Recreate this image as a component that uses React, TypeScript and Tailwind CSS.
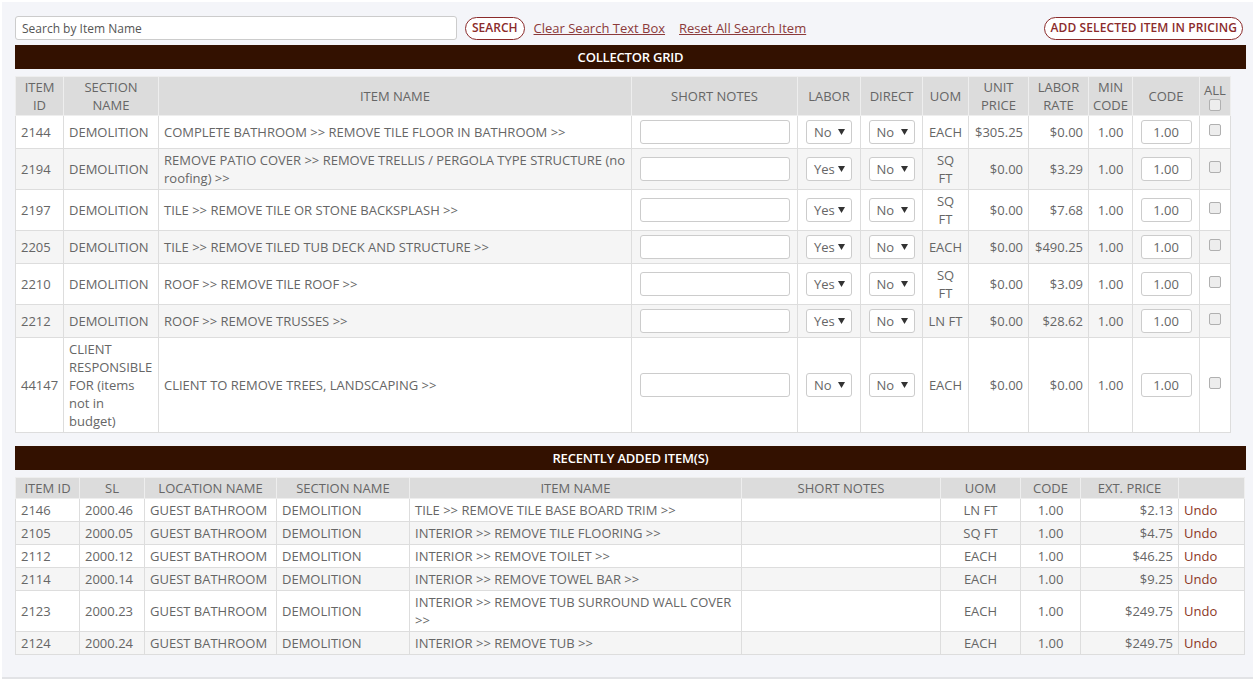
import type { ReactNode } from "react";

type CollectorRow = {
  id: string;
  section: string;
  name: string;
  labor: string;
  direct: string;
  uom: string;
  unit: string;
  rate: string;
};

const collectorRows: CollectorRow[] = [
  { id: "2144", section: "DEMOLITION", name: "COMPLETE BATHROOM >> REMOVE TILE FLOOR IN BATHROOM >>", labor: "No", direct: "No", uom: "EACH", unit: "$305.25", rate: "$0.00" },
  { id: "2194", section: "DEMOLITION", name: "REMOVE PATIO COVER >> REMOVE TRELLIS / PERGOLA TYPE STRUCTURE (no roofing) >>", labor: "Yes", direct: "No", uom: "SQ\nFT", unit: "$0.00", rate: "$3.29" },
  { id: "2197", section: "DEMOLITION", name: "TILE >> REMOVE TILE OR STONE BACKSPLASH >>", labor: "Yes", direct: "No", uom: "SQ\nFT", unit: "$0.00", rate: "$7.68" },
  { id: "2205", section: "DEMOLITION", name: "TILE >> REMOVE TILED TUB DECK AND STRUCTURE >>", labor: "Yes", direct: "No", uom: "EACH", unit: "$0.00", rate: "$490.25" },
  { id: "2210", section: "DEMOLITION", name: "ROOF >> REMOVE TILE ROOF >>", labor: "Yes", direct: "No", uom: "SQ\nFT", unit: "$0.00", rate: "$3.09" },
  { id: "2212", section: "DEMOLITION", name: "ROOF >> REMOVE TRUSSES >>", labor: "Yes", direct: "No", uom: "LN FT", unit: "$0.00", rate: "$28.62" },
  { id: "44147", section: "CLIENT RESPONSIBLE FOR (items not in budget)", name: "CLIENT TO REMOVE TREES, LANDSCAPING >>", labor: "No", direct: "No", uom: "EACH", unit: "$0.00", rate: "$0.00" },
];

const recentRows = [
  { id: "2146", sl: "2000.46", loc: "GUEST BATHROOM", section: "DEMOLITION", name: "TILE >> REMOVE TILE BASE BOARD TRIM >>", uom: "LN FT", price: "$2.13" },
  { id: "2105", sl: "2000.05", loc: "GUEST BATHROOM", section: "DEMOLITION", name: "INTERIOR >> REMOVE TILE FLOORING >>", uom: "SQ FT", price: "$4.75" },
  { id: "2112", sl: "2000.12", loc: "GUEST BATHROOM", section: "DEMOLITION", name: "INTERIOR >> REMOVE TOILET >>", uom: "EACH", price: "$46.25" },
  { id: "2114", sl: "2000.14", loc: "GUEST BATHROOM", section: "DEMOLITION", name: "INTERIOR >> REMOVE TOWEL BAR >>", uom: "EACH", price: "$9.25" },
  { id: "2123", sl: "2000.23", loc: "GUEST BATHROOM", section: "DEMOLITION", name: "INTERIOR >> REMOVE TUB SURROUND WALL COVER >>", uom: "EACH", price: "$249.75" },
  { id: "2124", sl: "2000.24", loc: "GUEST BATHROOM", section: "DEMOLITION", name: "INTERIOR >> REMOVE TUB >>", uom: "EACH", price: "$249.75" },
];

function Bar({ children }: { children: ReactNode }) {
  return (
    <div className="h-[24px] bg-[#331100] flex items-center justify-center text-white font-semibold text-[13px] tracking-[-0.2px]">
      {children}
    </div>
  );
}

function Th({ children }: { children?: ReactNode }) {
  return (
    <th className="bg-[#dcdcdc] border border-[#eeeeee] px-[4px] py-[1px] font-normal text-center align-middle text-[#666]">
      {children}
    </th>
  );
}

function Select({ value }: { value: string }) {
  return (
    <div className="relative w-[46px] h-[24px] my-[2px] mx-auto">
      <div className="w-full h-full border border-[#cccccc] rounded-[3px] bg-white flex items-center pl-[7px] text-[13px] text-[#666]">
        {value}
      </div>
      <svg className="absolute right-[7px] top-[9px]" width="7" height="6" viewBox="0 0 7 6">
        <polygon points="0,0 7,0 3.5,6" fill="#333" />
      </svg>
    </div>
  );
}

function Check() {
  return <span className="inline-block w-[12px] h-[12px] border border-[#b0b0b0] rounded-[2px] bg-[#ededed]" />;
}

export default function App() {
  const td = "border border-[#dddddd] px-[5px] py-[2px] align-middle";
  return (
    <div className="bg-white pt-[2px] px-[2px] min-h-[679px] text-[13px] leading-[18px] text-[#666]" style={{ fontFamily: '"Open Sans", sans-serif' }}>
      <div className="bg-[#f4f5f9] border-b-2 border-[#e2e3e6] pl-[13px] pr-[7px] pt-[14px] h-[677px]">
        <div className="flex items-center h-[24px]">
          <input
            className="w-[442px] h-[24px] border border-[#cccccc] rounded-[3px] bg-white px-[6px] text-[12px] text-[#555] outline-none"
            defaultValue="Search by Item Name"
          />
          <button className="ml-[8px] h-[23px] px-[6px] rounded-full border border-[#8b2b2b] text-[12px] font-semibold text-[#8b2b2b] bg-white">
            SEARCH
          </button>
          <a className="ml-[9px] underline text-[#8b3a3a] text-[13px]">Clear Search Text Box</a>
          <a className="ml-[14px] underline text-[#8b3a3a] text-[13px]">Reset All Search Item</a>
          <button className="ml-auto mr-[3px] h-[23px] px-[5px] rounded-full border border-[#8b2b2b] text-[12px] font-semibold tracking-[0.1px] text-[#8b2b2b] bg-white">
            ADD SELECTED ITEM IN PRICING
          </button>
        </div>

        <div className="mt-[5px]">
          <Bar>COLLECTOR GRID</Bar>
        </div>

        <table className="mt-[7px] w-[1215px] table-fixed border-collapse bg-white">
          <colgroup>
            <col className="w-[48px]" />
            <col className="w-[95px]" />
            <col className="w-[473px]" />
            <col className="w-[166px]" />
            <col className="w-[63px]" />
            <col className="w-[62px]" />
            <col className="w-[46px]" />
            <col className="w-[60px]" />
            <col className="w-[60px]" />
            <col className="w-[44px]" />
            <col className="w-[67px]" />
            <col className="w-[31px]" />
          </colgroup>
          <thead>
            <tr>
              <Th>ITEM ID</Th>
              <Th>SECTION NAME</Th>
              <Th>ITEM NAME</Th>
              <Th>SHORT NOTES</Th>
              <Th>LABOR</Th>
              <Th>DIRECT</Th>
              <Th>UOM</Th>
              <Th>UNIT PRICE</Th>
              <Th>LABOR RATE</Th>
              <Th>MIN CODE</Th>
              <Th>CODE</Th>
              <Th>
                <div className="flex flex-col items-center">
                  <span>ALL</span>
                  <Check />
                </div>
              </Th>
            </tr>
          </thead>
          <tbody>
            {collectorRows.map((r, i) => (
              <tr key={r.id} className={i % 2 === 1 ? "bg-[#f5f5f5]" : "bg-white"}>
                <td className={td}>{r.id}</td>
                <td className={td}>{r.section}</td>
                <td className={td}>{r.name}</td>
                <td className={td + " text-center"}>
                  <div className="mx-auto my-[2px] w-[150px] h-[24px] border border-[#cccccc] rounded-[3px] bg-white" />
                </td>
                <td className={td}>
                  <Select value={r.labor} />
                </td>
                <td className={td}>
                  <Select value={r.direct} />
                </td>
                <td className={td + " text-center px-[3px] whitespace-pre-line"}>{r.uom}</td>
                <td className={td + " text-right px-[4px]"}>{r.unit}</td>
                <td className={td + " text-right px-[4px]"}>{r.rate}</td>
                <td className={td + " text-center"}>1.00</td>
                <td className={td}>
                  <div className="mx-auto my-[2px] w-[51px] h-[24px] border border-[#cccccc] rounded-[3px] bg-white flex items-center justify-center">
                    1.00
                  </div>
                </td>
                <td className={td + " text-center"}>
                  <div className="-mt-[2px]">
                    <Check />
                  </div>
                </td>
              </tr>
            ))}
          </tbody>
        </table>

        <div className="mt-[13px]">
          <Bar>RECENTLY ADDED ITEM(S)</Bar>
        </div>

        <table className="mt-[7px] w-[1229px] table-fixed border-collapse bg-white">
          <colgroup>
            <col className="w-[64px]" />
            <col className="w-[65px]" />
            <col className="w-[132px]" />
            <col className="w-[133px]" />
            <col className="w-[332px]" />
            <col className="w-[199px]" />
            <col className="w-[80px]" />
            <col className="w-[60px]" />
            <col className="w-[98px]" />
            <col className="w-[66px]" />
          </colgroup>
          <thead>
            <tr>
              <Th>ITEM ID</Th>
              <Th>SL</Th>
              <Th>LOCATION NAME</Th>
              <Th>SECTION NAME</Th>
              <Th>ITEM NAME</Th>
              <Th>SHORT NOTES</Th>
              <Th>UOM</Th>
              <Th>CODE</Th>
              <Th>EXT. PRICE</Th>
              <Th />
            </tr>
          </thead>
          <tbody>
            {recentRows.map((r, i) => (
              <tr key={r.id} className={i % 2 === 1 ? "bg-[#f5f5f5]" : "bg-white"}>
                <td className={td}>{r.id}</td>
                <td className={td}>{r.sl}</td>
                <td className={td}>{r.loc}</td>
                <td className={td}>{r.section}</td>
                <td className={td}>{r.name}</td>
                <td className={td}></td>
                <td className={td + " text-center"}>{r.uom}</td>
                <td className={td + " text-center"}>1.00</td>
                <td className={td + " text-right"}>{r.price}</td>
                <td className={td + " text-[#8b3626]"}>Undo</td>
              </tr>
            ))}
          </tbody>
        </table>
      </div>
    </div>
  );
}
